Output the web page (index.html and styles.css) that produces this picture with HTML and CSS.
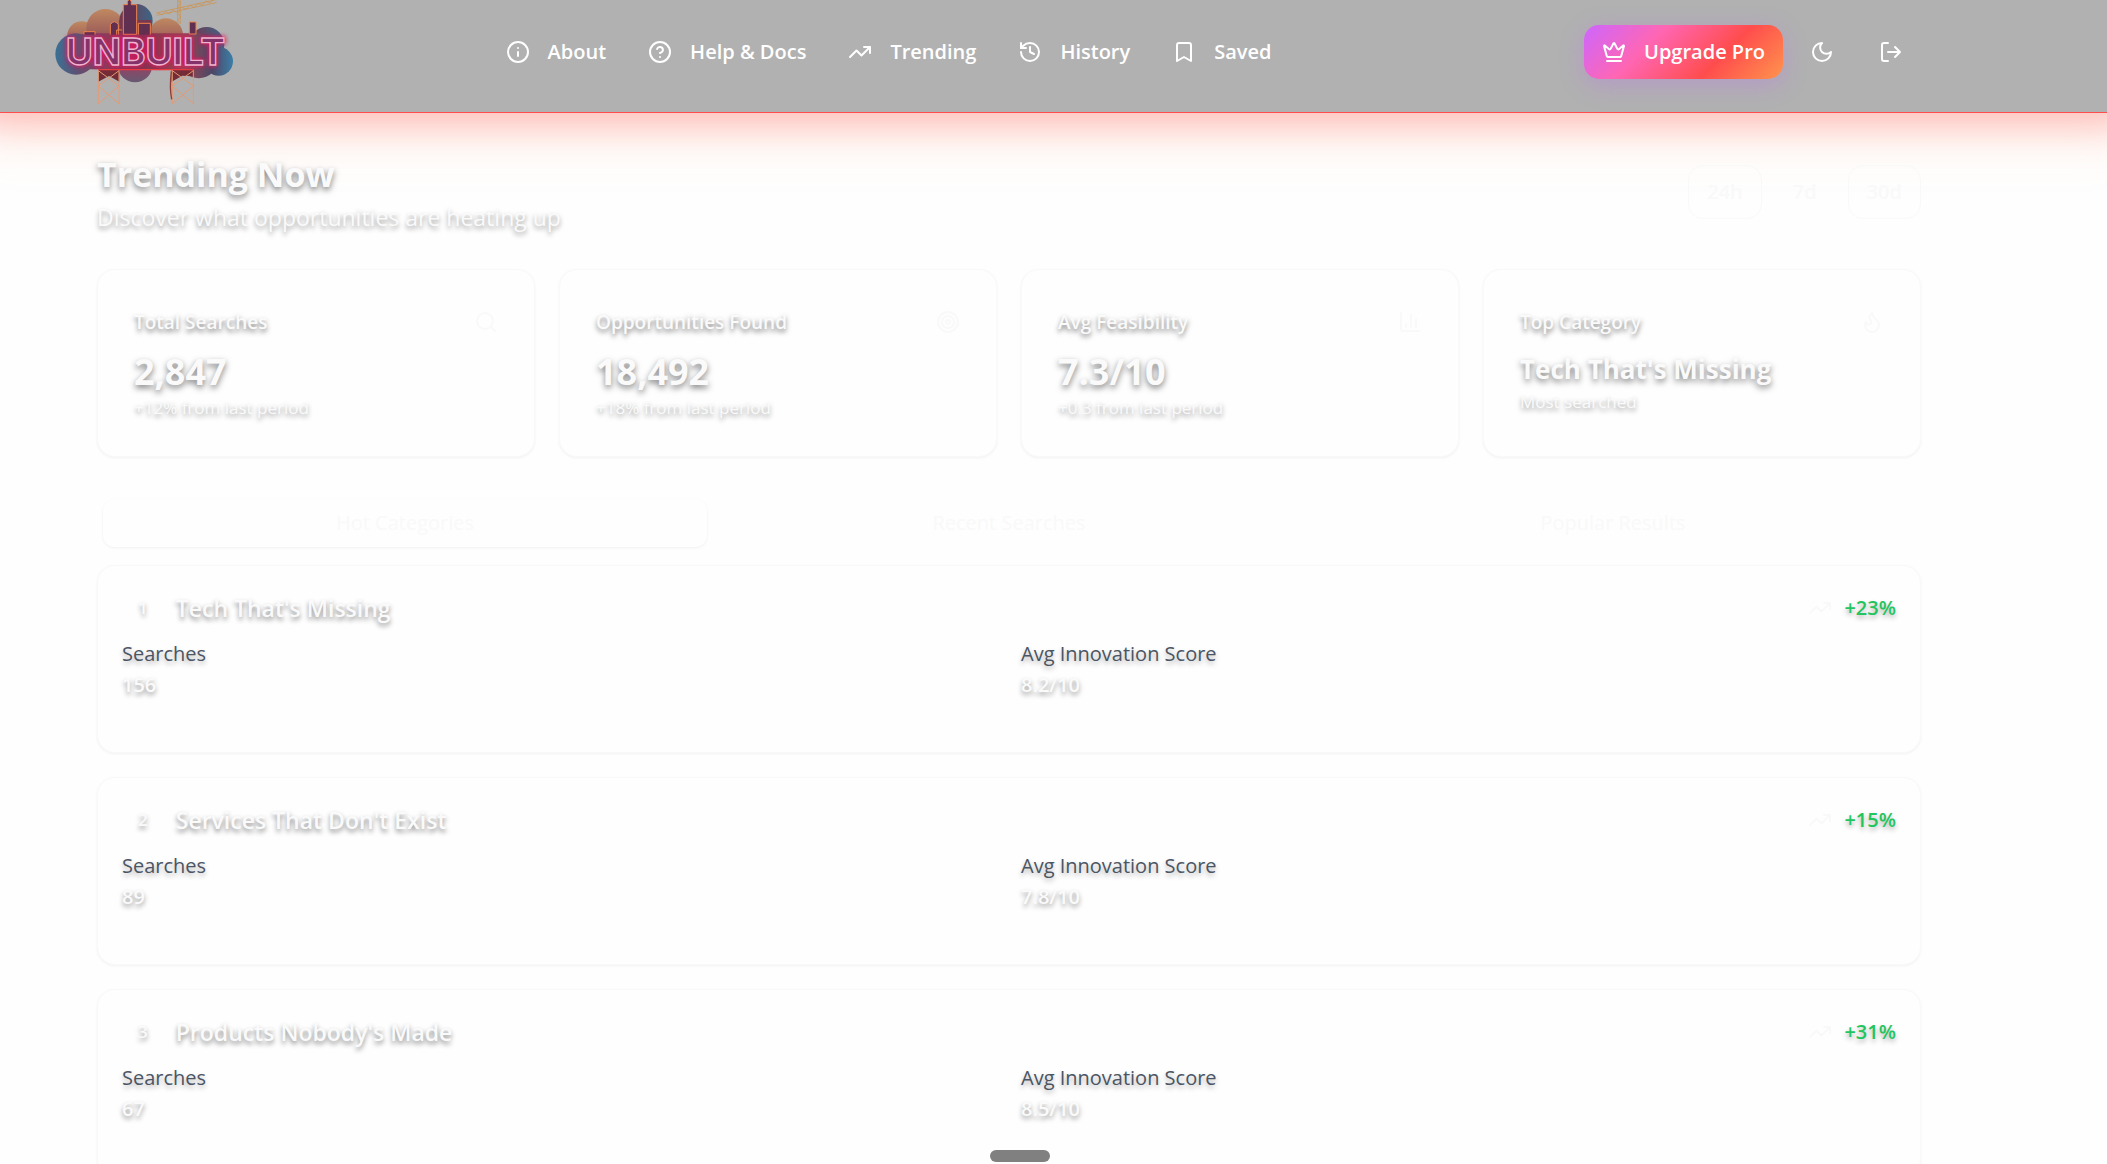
FILE: index.html
```html
<!DOCTYPE html>
<html lang="en">
<head>
<meta charset="utf-8">
<meta name="viewport" content="width=device-width, initial-scale=1">
<title>Unbuilt – Trending Now</title>
<link rel="stylesheet" href="styles.css">
</head>
<body>
<svg class="sprite" aria-hidden="true">
  <symbol id="i-trend" viewBox="0 0 24 24"><path d="M22 7 13.500 15.500l-5-5L2 17"/><path d="M16 7h6v6"/></symbol>
</svg>
<div class="app">
  <header class="topbar">
    <a class="logo" href="#" aria-label="Unbuilt home">
      <svg class="logo-art" viewBox="75 0 540 321" aria-hidden="true">
        <defs>
          <linearGradient id="cloud" x1="75" y1="0" x2="610" y2="0" gradientUnits="userSpaceOnUse">
            <stop offset="0" stop-color="#3b7196"/><stop offset=".12" stop-color="#5c5274"/><stop offset=".3" stop-color="#8d3a58"/>
            <stop offset=".5" stop-color="#84334f"/><stop offset=".72" stop-color="#9a4752"/><stop offset=".88" stop-color="#4b4766"/><stop offset="1" stop-color="#3c7fa8"/>
          </linearGradient>
          <linearGradient id="puff" x1="0" y1="0" x2="0" y2="1"><stop offset="0" stop-color="#bf8961"/><stop offset="1" stop-color="#8b4455"/></linearGradient>
          <linearGradient id="puffBlue" x1="0" y1="0" x2="1" y2="0"><stop offset="0" stop-color="#74364f"/><stop offset="1" stop-color="#3d6585"/></linearGradient>
          <linearGradient id="bottom" x1="0" y1="0" x2="0" y2="1"><stop offset="0" stop-color="#c52c54"/><stop offset="1" stop-color="#675972"/></linearGradient>
          <filter id="glow" x="-20%" y="-60%" width="140%" height="220%"><feGaussianBlur stdDeviation="6"/></filter>
        </defs>
        <circle cx="155" cy="107" r="43" fill="url(#puff)"/>
        <circle cx="226" cy="84" r="57" fill="url(#puff)"/>
        <circle cx="408" cy="106" r="51" fill="url(#puff)"/>
        <circle cx="318" cy="62" r="50" fill="url(#puffBlue)"/>
        <path d="M268 60h96v50h-96zM440 108h60v20h-60z" fill="#78384f"/>
        <circle cx="530" cy="134" r="53" fill="url(#puffBlue)"/>
        <circle cx="315" cy="195" r="52" fill="url(#bottom)"/>
        <circle cx="138" cy="162" r="62" fill="url(#cloud)"/>
        <circle cx="566" cy="184" r="43" fill="url(#cloud)"/>
        <circle cx="506" cy="176" r="59" fill="url(#cloud)"/>
        <rect x="138" y="100" width="410" height="108" rx="30" fill="url(#cloud)"/>
        <g fill="#612f4f" stroke="#f0844f" stroke-width="3">
          <path d="M280 103V14h12V5l6-8 6 8v9h16v89z"/>
          <path d="M241 104V74q12-18 24 0v30M260 104V90h16"/>
          <path d="M325 104V70h36v34M162 104V95h33v9M478 102V66h20v36z"/>
        </g>
        <g fill="none" stroke="#d08f45" stroke-width="2">
          <path d="M443 0v72M451 0v72M378 39 562-2M380 46 560 8"/>
          <path d="m443 0 8 10-8 10 8 10-8 10 8 10-8 10 8 10M384 39l12 6 10-11 12 8 10-12 12 7M456 22l12 6 12-13 12 8 12-13 12 6 12-13 12 6 12-12"/>
        </g>
        <path d="M205 209h63v36l-31-17-32 17zM425 209h65v20l-33-2-32 18z" fill="#742c36"/>
        <g fill="none" stroke="#e29b76" stroke-width="3">
          <path d="M205 209v103M267 209v103M427 209v103M490 209v103"/>
          <path d="m205 212 62 46-62 53M267 212l-62 46 62 53M427 212l63 46-63 53M490 212l-63 46 63 53"/>
        </g>
        <path d="M205 209h285" stroke="#e93e40" stroke-width="4"/>
        <path d="M424 214q-6 50 1 84" fill="none" stroke="#8b3e38" stroke-width="4"/>
        <text class="logo-text logo-glow" x="107" y="195" filter="url(#glow)">UNBUILT</text>
        <text class="logo-text" x="107" y="195">UNBUILT</text>
      </svg>
    </a>
    <nav class="nav" aria-label="Main">
      <a class="nav-link" href="#"><svg class="icon" viewBox="0 0 24 24"><circle cx="12" cy="12" r="10"/><path d="M12 16v-4M12 8h.01"/></svg>About</a>
      <a class="nav-link" href="#"><svg class="icon" viewBox="0 0 24 24"><circle cx="12" cy="12" r="10"/><path d="M9.090 9a3 3 0 0 1 5.830 1c0 2-3 3-3 3M12 17h.01"/></svg>Help &amp; Docs</a>
      <a class="nav-link" href="#"><svg class="icon"><use href="#i-trend"/></svg>Trending</a>
      <a class="nav-link" href="#"><svg class="icon" viewBox="0 0 24 24"><path d="M3 12a9 9 0 1 0 9-9 9.750 9.750 0 0 0-6.740 2.740L3 8"/><path d="M3 3v5h5M12 7v5l4 2"/></svg>History</a>
      <a class="nav-link" href="#"><svg class="icon" viewBox="0 0 24 24"><path d="m19 21-7-4-7 4V5a2 2 0 0 1 2-2h10a2 2 0 0 1 2 2v16z"/></svg>Saved</a>
    </nav>
    <div class="actions">
      <button class="upgrade" type="button"><svg class="icon" viewBox="0 0 24 24"><path d="M11.562 3.266a.5.5 0 0 1 .876 0L15.390 8.870a1 1 0 0 0 1.516.294L21.183 5.500a.5.5 0 0 1 .798.519l-2.834 10.246a1 1 0 0 1-.956.734H5.810a1 1 0 0 1-.957-.734L2.020 6.020a.5.5 0 0 1 .798-.519l4.276 3.664a1 1 0 0 0 1.516-.294zM5 21h14"/></svg>Upgrade Pro</button>
      <button class="icon-btn" type="button" aria-label="Toggle theme"><svg class="icon" viewBox="0 0 24 24"><path d="M12 3a6 6 0 0 0 9 9 9 9 0 1 1-9-9Z"/></svg></button>
      <button class="icon-btn icon-btn-wide" type="button" aria-label="Log out"><svg class="icon" viewBox="0 0 24 24"><path d="M9 21H5a2 2 0 0 1-2-2V5a2 2 0 0 1 2-2h4M16 17l5-5-5-5M21 12H9"/></svg></button>
    </div>
  </header>

  <main class="content">
    <div class="container">
      <section class="page-head">
        <div>
          <h1 class="title">Trending Now</h1>
          <p class="subtitle">Discover what opportunities are heating up</p>
        </div>
        <div class="ranges">
          <button class="range" type="button">24h</button>
          <button class="range range-active" type="button">7d</button>
          <button class="range" type="button">30d</button>
        </div>
      </section>

      <section class="stats">
        <article class="card stat">
          <div class="stat-head"><h2 class="stat-label">Total Searches</h2><svg class="icon faint" viewBox="0 0 24 24"><circle cx="11" cy="11" r="8"/><path d="m21 21-4.300-4.300"/></svg></div>
          <p class="stat-value">2,847</p><p class="stat-note">+12% from last period</p>
        </article>
        <article class="card stat">
          <div class="stat-head"><h2 class="stat-label">Opportunities Found</h2><svg class="icon faint" viewBox="0 0 24 24"><circle cx="12" cy="12" r="10"/><circle cx="12" cy="12" r="6"/><circle cx="12" cy="12" r="2"/></svg></div>
          <p class="stat-value">18,492</p><p class="stat-note">+18% from last period</p>
        </article>
        <article class="card stat">
          <div class="stat-head"><h2 class="stat-label">Avg Feasibility</h2><svg class="icon faint" viewBox="0 0 24 24"><path d="M3 3v16a2 2 0 0 0 2 2h16M18 17V9M13 17V5M8 17v-3"/></svg></div>
          <p class="stat-value">7.3/10</p><p class="stat-note">+0.3 from last period</p>
        </article>
        <article class="card stat">
          <div class="stat-head"><h2 class="stat-label">Top Category</h2><svg class="icon faint" viewBox="0 0 24 24"><path d="M8.500 14.500A2.500 2.500 0 0 0 11 12c0-1.380-.5-2-1-3-1.072-2.143-.224-4.054 2-6 .5 2.500 2 4.900 4 6.500 2 1.600 3 3.500 3 5.500a7 7 0 1 1-14 0c0-1.153.433-2.294 1-3a2.500 2.500 0 0 0 2.500 2.500z"/></svg></div>
          <p class="stat-value stat-value-small">Tech That's Missing</p><p class="stat-note">Most searched</p>
        </article>
      </section>

      <div class="tabs" role="tablist">
        <button class="tab tab-active" type="button" role="tab" aria-selected="true">Hot Categories</button>
        <button class="tab" type="button" role="tab" aria-selected="false">Recent Searches</button>
        <button class="tab" type="button" role="tab" aria-selected="false">Popular Results</button>
      </div>

      <section class="list">
        <article class="card entry">
          <div class="entry-head">
            <span class="rank">1</span><h3 class="entry-title">Tech That's Missing</h3>
            <span class="growth"><svg class="icon faint"><use href="#i-trend"/></svg>+23%</span>
          </div>
          <dl class="metrics">
            <div><dt>Searches</dt><dd>156</dd></div>
            <div><dt>Avg Innovation Score</dt><dd>8.2/10</dd></div>
          </dl>
        </article>
        <article class="card entry">
          <div class="entry-head">
            <span class="rank">2</span><h3 class="entry-title">Services That Don't Exist</h3>
            <span class="growth"><svg class="icon faint"><use href="#i-trend"/></svg>+15%</span>
          </div>
          <dl class="metrics">
            <div><dt>Searches</dt><dd>89</dd></div>
            <div><dt>Avg Innovation Score</dt><dd>7.8/10</dd></div>
          </dl>
        </article>
        <article class="card entry">
          <div class="entry-head">
            <span class="rank">3</span><h3 class="entry-title">Products Nobody's Made</h3>
            <span class="growth"><svg class="icon faint"><use href="#i-trend"/></svg>+31%</span>
          </div>
          <dl class="metrics">
            <div><dt>Searches</dt><dd>67</dd></div>
            <div><dt>Avg Innovation Score</dt><dd>8.5/10</dd></div>
          </dl>
        </article>
      </section>
    </div>
  </main>
  <div class="handle"></div>
</div>
</body>
</html>
```
FILE: styles.css
```css
* { box-sizing: border-box; }

body, h1, h2, h3, p, dl, dd { margin: 0; }

body {
  font-family: "Segoe UI", "Open Sans", "Noto Sans", sans-serif;
  font-size: 20px;
  line-height: 32px;
  color: #fafafa;
  background: #fefefe;
}

button {
  font: inherit;
  color: inherit;
  border: 0;
  background: none;
  cursor: pointer;
}

a { color: inherit; text-decoration: none; }

.sprite { position: absolute; width: 0; height: 0; }

.icon {
  flex: none;
  width: 24px;
  height: 24px;
  fill: none;
  stroke: currentColor;
  stroke-width: 2;
  stroke-linecap: round;
  stroke-linejoin: round;
}

.faint { color: #f9f9f9; }

.app {
  display: flex;
  flex-direction: column;
  height: 100vh;
  overflow: hidden;
}

/* Top bar */
.topbar {
  display: flex;
  flex: none;
  align-items: flex-start;
  justify-content: space-between;
  height: 113px;
  padding: 0 186px 0 55px;
  background: #b1b1b1;
  border-bottom: 1px solid #ff4d4d;
  box-shadow: 0 -12px 36px 24px rgba(255, 77, 77, 0.35), 0 -8px 64px 32px rgba(255, 170, 80, 0.1);
}

.logo { width: 138px; }

.logo-art {
  display: block;
  width: 180px;
  height: 107px;
}

.logo-text {
  font-family: Inter, sans-serif;
  font-size: 111px;
  font-weight: 700;
  fill: rgba(110, 58, 110, 0.8);
  stroke: #efb3cf;
  stroke-width: 4;
}

.logo-glow {
  fill: #d81b60;
  stroke: #e01660;
  stroke-width: 10;
}

.nav {
  display: flex;
  gap: 6px;
  padding-top: 25px;
}

.nav-link {
  display: flex;
  align-items: center;
  gap: 18px;
  height: 54px;
  padding: 0 18px;
  font-weight: 600;
  color: #fff;
}

.actions {
  display: flex;
  gap: 12px;
  padding-top: 25px;
  color: #fff;
}

.upgrade {
  display: flex;
  align-items: center;
  gap: 18px;
  height: 54px;
  padding: 0 18px;
  font-weight: 600;
  border-radius: 15px;
  background: linear-gradient(135deg, #cc66ff, #ff66b3 33%, #ff4d4d 67%, #ff944d);
  box-shadow: 0 6px 24px rgba(191, 102, 255, 0.3);
}

.icon-btn {
  display: flex;
  align-items: center;
  justify-content: center;
  width: 54px;
  height: 54px;
  padding: 0;
}

.icon-btn-wide { width: 60px; }

/* Page */
.content {
  flex: 1;
  min-height: 0;
  padding: 36px 186px 48px 97px;
}

.page-head {
  display: flex;
  align-items: center;
  justify-content: space-between;
  margin-bottom: 34px;
}

.title {
  font-size: 34px;
  font-weight: 700;
  line-height: 50px;
  text-shadow: 0 3px 6px rgba(0, 0, 0, 0.5);
}

.subtitle {
  font-size: 23px;
  line-height: 36px;
  text-shadow: 0 3px 5px rgba(0, 0, 0, 0.4);
}

.ranges { display: flex; gap: 12px; }

.range {
  height: 54px;
  padding: 0 18px;
  font-weight: 600;
  color: #f9f9f9;
  border: 1px solid #f9f9f9;
  border-radius: 15px;
}

.range-active { border-color: transparent; }

.card {
  border: 1px solid #f9f9f9;
  border-radius: 18px;
  background: #fefefe;
  box-shadow: 0 1px 3px rgba(0, 0, 0, 0.05);
}

.stats {
  display: grid;
  grid-template-columns: repeat(4, 1fr);
  gap: 24px;
  margin-bottom: 36px;
}

.stat { padding: 36px; }

.stat-head {
  display: flex;
  align-items: center;
  justify-content: space-between;
  margin-bottom: 10px;
}

.stat-label {
  font-size: 19px;
  font-weight: 600;
  text-shadow: 0 3px 5px rgba(0, 0, 0, 0.5);
}

.stat-value {
  font-size: 36px;
  font-weight: 700;
  line-height: 48px;
  text-shadow: 0 3px 6px rgba(0, 0, 0, 0.5);
}

.stat-value-small {
  font-size: 26px;
  line-height: 42px;
}

.stat-note {
  font-size: 17px;
  line-height: 24px;
  text-shadow: 0 3px 5px rgba(0, 0, 0, 0.4);
}

.tabs {
  display: grid;
  grid-template-columns: repeat(3, 1fr);
  padding: 6px;
  margin-bottom: 12px;
}

.tab {
  height: 48px;
  padding: 0 18px;
  font-weight: 500;
  color: #f9f9f9;
  border-radius: 12px;
}

.tab-active { box-shadow: 0 1px 3px rgba(0, 0, 0, 0.06); }

.list { display: grid; gap: 24px; }

.entry { padding: 24px 24px 50px; }

.entry-head {
  display: flex;
  align-items: center;
  gap: 12px;
  margin-bottom: 12px;
}

.rank {
  padding: 0 16px;
  font-size: 17px;
  font-weight: 600;
  text-shadow: 0 3px 5px rgba(0, 0, 0, 0.4);
}

.entry-title {
  flex: 1;
  font-size: 23px;
  font-weight: 600;
  line-height: 36px;
  text-shadow: 0 3px 5px rgba(0, 0, 0, 0.45);
}

.growth {
  display: flex;
  align-items: center;
  gap: 12px;
  font-weight: 600;
  color: #22c55e;
  text-shadow: 0 3px 5px rgba(0, 0, 0, 0.3);
}

.metrics {
  display: grid;
  grid-template-columns: 1fr 1fr;
  gap: 24px;
}

.metrics dt {
  color: #4b5563;
  text-shadow: 0 3px 5px rgba(0, 0, 0, 0.3);
}

.metrics dd {
  line-height: 30px;
  padding-bottom: 2px;
  font-weight: 600;
  text-shadow: 0 3px 5px rgba(0, 0, 0, 0.4);
}

/* Drag handle over the bottom edge */
.handle {
  position: fixed;
  bottom: 2px;
  left: 47%;
  width: 60px;
  height: 12px;
  border-radius: 6px;
  background: #808080;
}
```
